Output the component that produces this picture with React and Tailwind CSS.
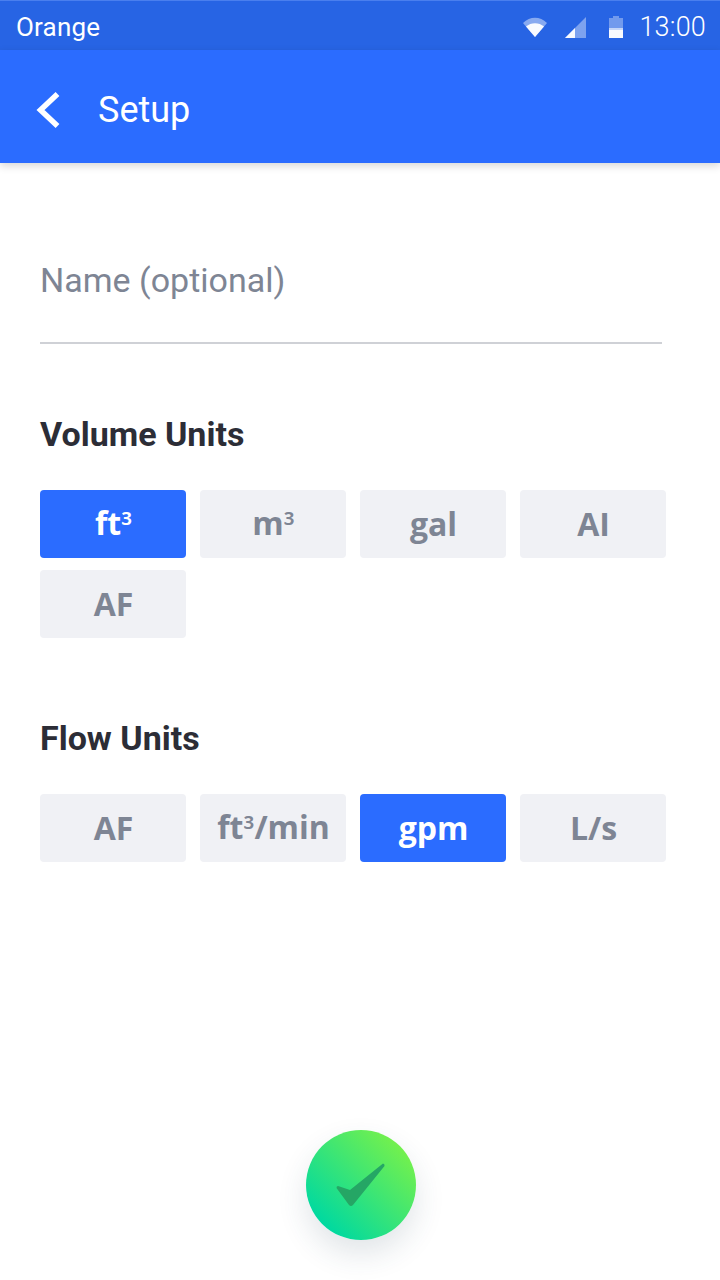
import React from "react";

const roboto = "font-['Roboto',sans-serif]";

function Label({ text }) {
  const i = text.indexOf("³");
  if (i < 0) return text;
  return (
    <>
      {text.slice(0, i)}
      <span className="text-[30px] font-semibold align-[-2px]">³</span>
      {text.slice(i + 1)}
    </>
  );
}

function Chip({ label, active }) {
  return (
    <div
      className={`w-[146px] h-[68px] rounded-[4px] flex items-center justify-center font-['Open_Sans',sans-serif] font-bold text-[32px] leading-none ${
        active ? "bg-[#2b6cff] text-white" : "bg-[#f0f1f5] text-[#7e8594]"
      }`}
    >
      <span className="pl-[1px]">
        <Label text={label} />
      </span>
    </div>
  );
}

function ChipGrid({ items, active }) {
  return (
    <div className="flex flex-wrap gap-x-[14px] gap-y-[12px] w-[640px]">
      {items.map((it) => (
        <Chip key={it} label={it} active={it === active} />
      ))}
    </div>
  );
}

export default function App() {
  return (
    <div className={`relative w-[720px] h-[1280px] bg-white overflow-hidden flex flex-col ${roboto}`}>
      <div className="h-[50px] bg-[#2764e4] border-t border-[#4a7fee] flex items-center justify-between pl-4 pr-[14px] pt-[3px] text-white text-[26px] tracking-[0.2px]">
        <span>Orange</span>
        <div className="flex items-center">
          <svg width="24" height="21" viewBox="0 0 24 21" className="mr-[18px]">
            <path d="M0 6 C7 -1 17 -1 24 6 L12 20 Z" fill="#fff" fillOpacity="0.45" />
            <path d="M3 9.5 C8 5 16 5 21 9.5 L12 20 Z" fill="#fff" fillOpacity="0.95" />
          </svg>
          <svg width="21" height="21" viewBox="0 0 21 21" className="mr-[23px]">
            <path d="M21 0 V21 H0 Z" fill="#fff" fillOpacity="0.4" />
            <path d="M10 11 V21 H0 Z" fill="#fff" fillOpacity="0.95" />
          </svg>
          <svg width="14" height="22" viewBox="0 0 14 22" className="mr-[16px]">
            <path d="M4 0 H10 V2 H14 V22 H0 V2 H4 Z" fill="#fff" fillOpacity="0.35" />
            <path d="M0 14 H14 V22 H0 Z" fill="#fff" fillOpacity="0.95" />
            <path d="M0 12 H14 V14 H0 Z" fill="#fff" fillOpacity="0.6" />
          </svg>
          <span className="text-[27px] font-light">13:00</span>
        </div>
      </div>

      <div className="h-[113px] bg-[#2b6cff] shadow-[0_3px_8px_rgba(0,0,0,0.16)] flex items-center pl-[36px] text-white z-10">
        <svg width="24" height="36" viewBox="0 0 24 36" className="mr-[38px] mt-[6px]">
          <path d="M21.5 2 L4.5 18 L21.5 34" fill="none" stroke="#fff" strokeWidth="5.5" />
        </svg>
        <span className="text-[36px] mt-[6px]">Setup</span>
      </div>

      <div className="flex-1 flex flex-col pl-[40px]">
        <div className="mt-[98px] w-[622px] h-[83px] border-b-2 border-[#cfd1d6] text-[34px] leading-[38px] text-[#7e8594]">
          Name (optional)
        </div>
        <h2 className="mt-[70px] text-[34px] leading-[40px] font-bold text-[#2c2d36]">Volume Units</h2>
        <div className="mt-[36px]">
          <ChipGrid items={["ft³", "m³", "gal", "AI", "AF"]} active="ft³" />
        </div>
        <h2 className="mt-[80px] text-[34px] leading-[40px] font-bold text-[#2c2d36]">Flow Units</h2>
        <div className="mt-[36px]">
          <ChipGrid items={["AF", "ft³/min", "gpm", "L/s"]} active="gpm" />
        </div>
      </div>

      <div className="flex justify-center pb-[40px] pl-[2px]">
        <div className="w-[110px] h-[110px] rounded-full bg-[linear-gradient(45deg,#00d9a0_15%,#72f04e_85%)] shadow-[0_14px_30px_rgba(40,70,90,0.14)] flex items-center justify-center">
          <svg width="50" height="46" viewBox="0 0 50 46">
            <path d="M2 24 L14 28 L47 1.5 Q49 2 48.5 4 L17 43 Q15 45 13 43 L0.5 26 Q0.5 24 2 24 Z" fill="#25a665" />
          </svg>
        </div>
      </div>
    </div>
  );
}
